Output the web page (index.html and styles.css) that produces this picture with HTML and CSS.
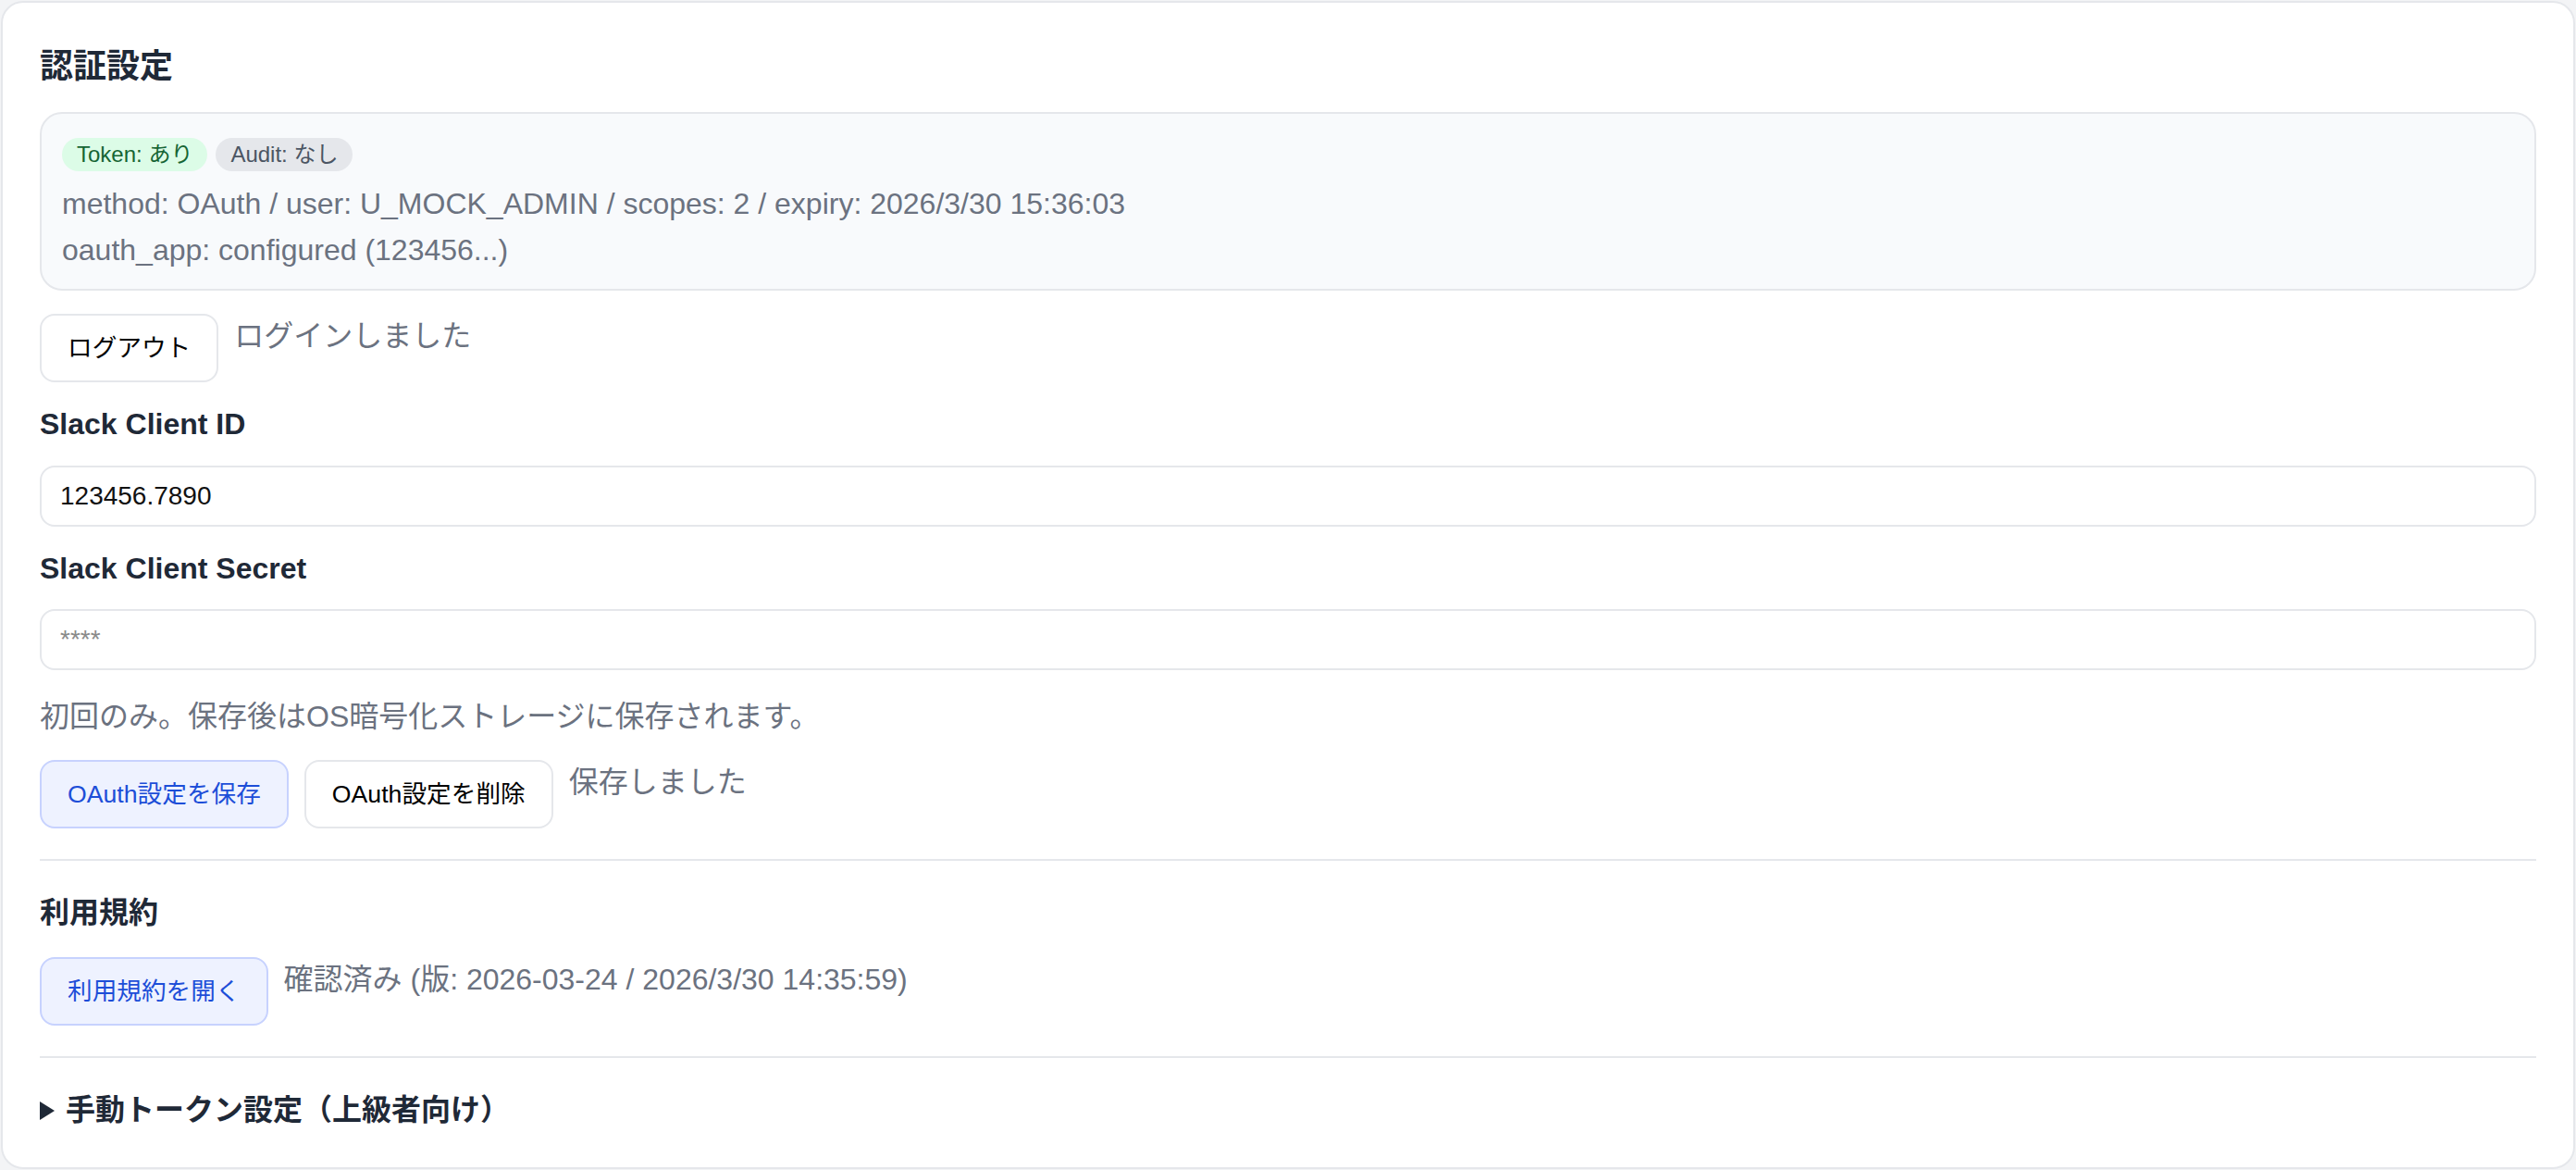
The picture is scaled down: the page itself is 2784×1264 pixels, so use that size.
FILE: index.html
```html
<!DOCTYPE html>
<html lang="ja">
<head>
    <meta charset="UTF-8">
    <meta name="viewport" content="width=device-width, initial-scale=1.0">
    <title>認証設定</title>
    <link rel="stylesheet" href="styles.css">
</head>
<body>
    <div class="card">
        <h2 class="title">認証設定</h2>

        <div class="status-box">
            <div class="badges">
                <span class="badge badge-ok">Token: あり</span>
                <span class="badge badge-off">Audit: なし</span>
            </div>
            <div class="status-line">method: OAuth / user: U_MOCK_ADMIN / scopes: 2 / expiry: 2026/3/30 15:36:03</div>
            <div class="status-line">oauth_app: configured (123456...)</div>
        </div>

        <div class="row row-logout">
            <button class="btn">ログアウト</button>
            <span class="note">ログインしました</span>
        </div>

        <label class="field-label" for="clientId">Slack Client ID</label>
        <input id="clientId" class="field" type="text" value="123456.7890">

        <label class="field-label" for="clientSecret">Slack Client Secret</label>
        <input id="clientSecret" class="field field-secret" type="password" placeholder="****">

        <p class="hint">初回のみ。保存後はOS暗号化ストレージに保存されます。</p>

        <div class="row row-oauth">
            <button class="btn btn-primary">OAuth設定を保存</button>
            <button class="btn">OAuth設定を削除</button>
            <span class="note">保存しました</span>
        </div>

        <hr class="divider">

        <h3 class="section-title">利用規約</h3>
        <div class="row row-terms">
            <button class="btn btn-primary">利用規約を開く</button>
            <span class="note">確認済み (版: 2026-03-24 / 2026/3/30 14:35:59)</span>
        </div>

        <hr class="divider">

        <details class="advanced">
            <summary>手動トークン設定（上級者向け）</summary>
        </details>
    </div>
</body>
</html>
```

FILE: styles.css
```css
body {
    margin: 0;
    padding: 1px;
    background-color: #f3f4f6;
    font-family: "Liberation Sans", "Noto Sans CJK JP", sans-serif;
    color: #1f2937;
}
.card {
    background-color: #fff;
    border: 2px solid #e5e7eb;
    border-radius: 24px;
    padding: 44px 40px 38px;
}
.title {
    margin: 0 0 24px;
    font-size: 36px;
    line-height: 50px;
    font-weight: bold;
    color: #1f2937;
}
.status-box {
    background-color: #f8fafc;
    border: 2px solid #e5e7eb;
    border-radius: 24px;
    padding: 26px 22px 17px;
}
.badges {
    display: flex;
    gap: 9px;
    margin-bottom: 10px;
}
.badge {
    font-size: 24px;
    line-height: 28px;
    padding: 4px 16px;
    border-radius: 999px;
}
.badge-ok {
    background-color: #dcfce7;
    color: #166534;
}
.badge-off {
    background-color: #e5e7eb;
    color: #4b5563;
}
.status-line {
    font-size: 32px;
    line-height: 50px;
    color: #6b7280;
}
.row {
    display: flex;
    align-items: flex-start;
    gap: 17px;
}
.row-logout {
    margin-top: 25px;
}
.row-oauth {
    margin-top: 23px;
}
.row-terms {
    margin-top: 24px;
}
.note {
    font-size: 32px;
    line-height: 48px;
    color: #6b7280;
}
.btn {
    font-family: "Liberation Sans", "Noto Sans CJK JP", sans-serif;
    font-size: 26.67px;
    line-height: 30px;
    padding: 20px 28px;
    background-color: #fff;
    color: #000;
    border: 2px solid #e5e7eb;
    border-radius: 16px;
    cursor: pointer;
}
.btn-primary {
    background-color: #eef2ff;
    border-color: #c7d2fe;
    color: #1d4ed8;
}
.field-label {
    display: block;
    margin-top: 21px;
    font-size: 32px;
    line-height: 48px;
    font-weight: bold;
    color: #1f2937;
}
.field {
    display: block;
    box-sizing: border-box;
    width: 100%;
    height: 66px;
    margin-top: 21px;
    padding: 0 20px;
    font-family: "Liberation Sans", "Noto Sans CJK JP", sans-serif;
    font-size: 28px;
    color: #111;
    background-color: #fff;
    border: 2px solid #e5e7eb;
    border-radius: 16px;
    outline: none;
}
.field-secret {
    margin-top: 20px;
}
.field::placeholder {
    color: #8a8a8a;
}
.hint {
    margin: 26px 0 0;
    font-size: 32px;
    line-height: 48px;
    color: #6b7280;
}
.divider {
    height: 0;
    margin: 33px 0 0;
    border: 0;
    border-top: 2px solid #e5e7eb;
}
.section-title {
    margin: 32px 0 0;
    font-size: 32px;
    line-height: 48px;
    font-weight: bold;
    color: #1f2937;
}
.advanced {
    margin-top: 32px;
}
.advanced summary {
    display: flex;
    align-items: center;
    list-style: none;
    font-size: 32px;
    line-height: 48px;
    font-weight: bold;
    color: #1f2937;
    cursor: pointer;
}
.advanced summary::-webkit-details-marker {
    display: none;
}
.advanced summary::before {
    content: "";
    width: 0;
    height: 0;
    margin: 2px 12px 0 0;
    border-left: 16px solid #1f2937;
    border-top: 10px solid transparent;
    border-bottom: 10px solid transparent;
}
```
